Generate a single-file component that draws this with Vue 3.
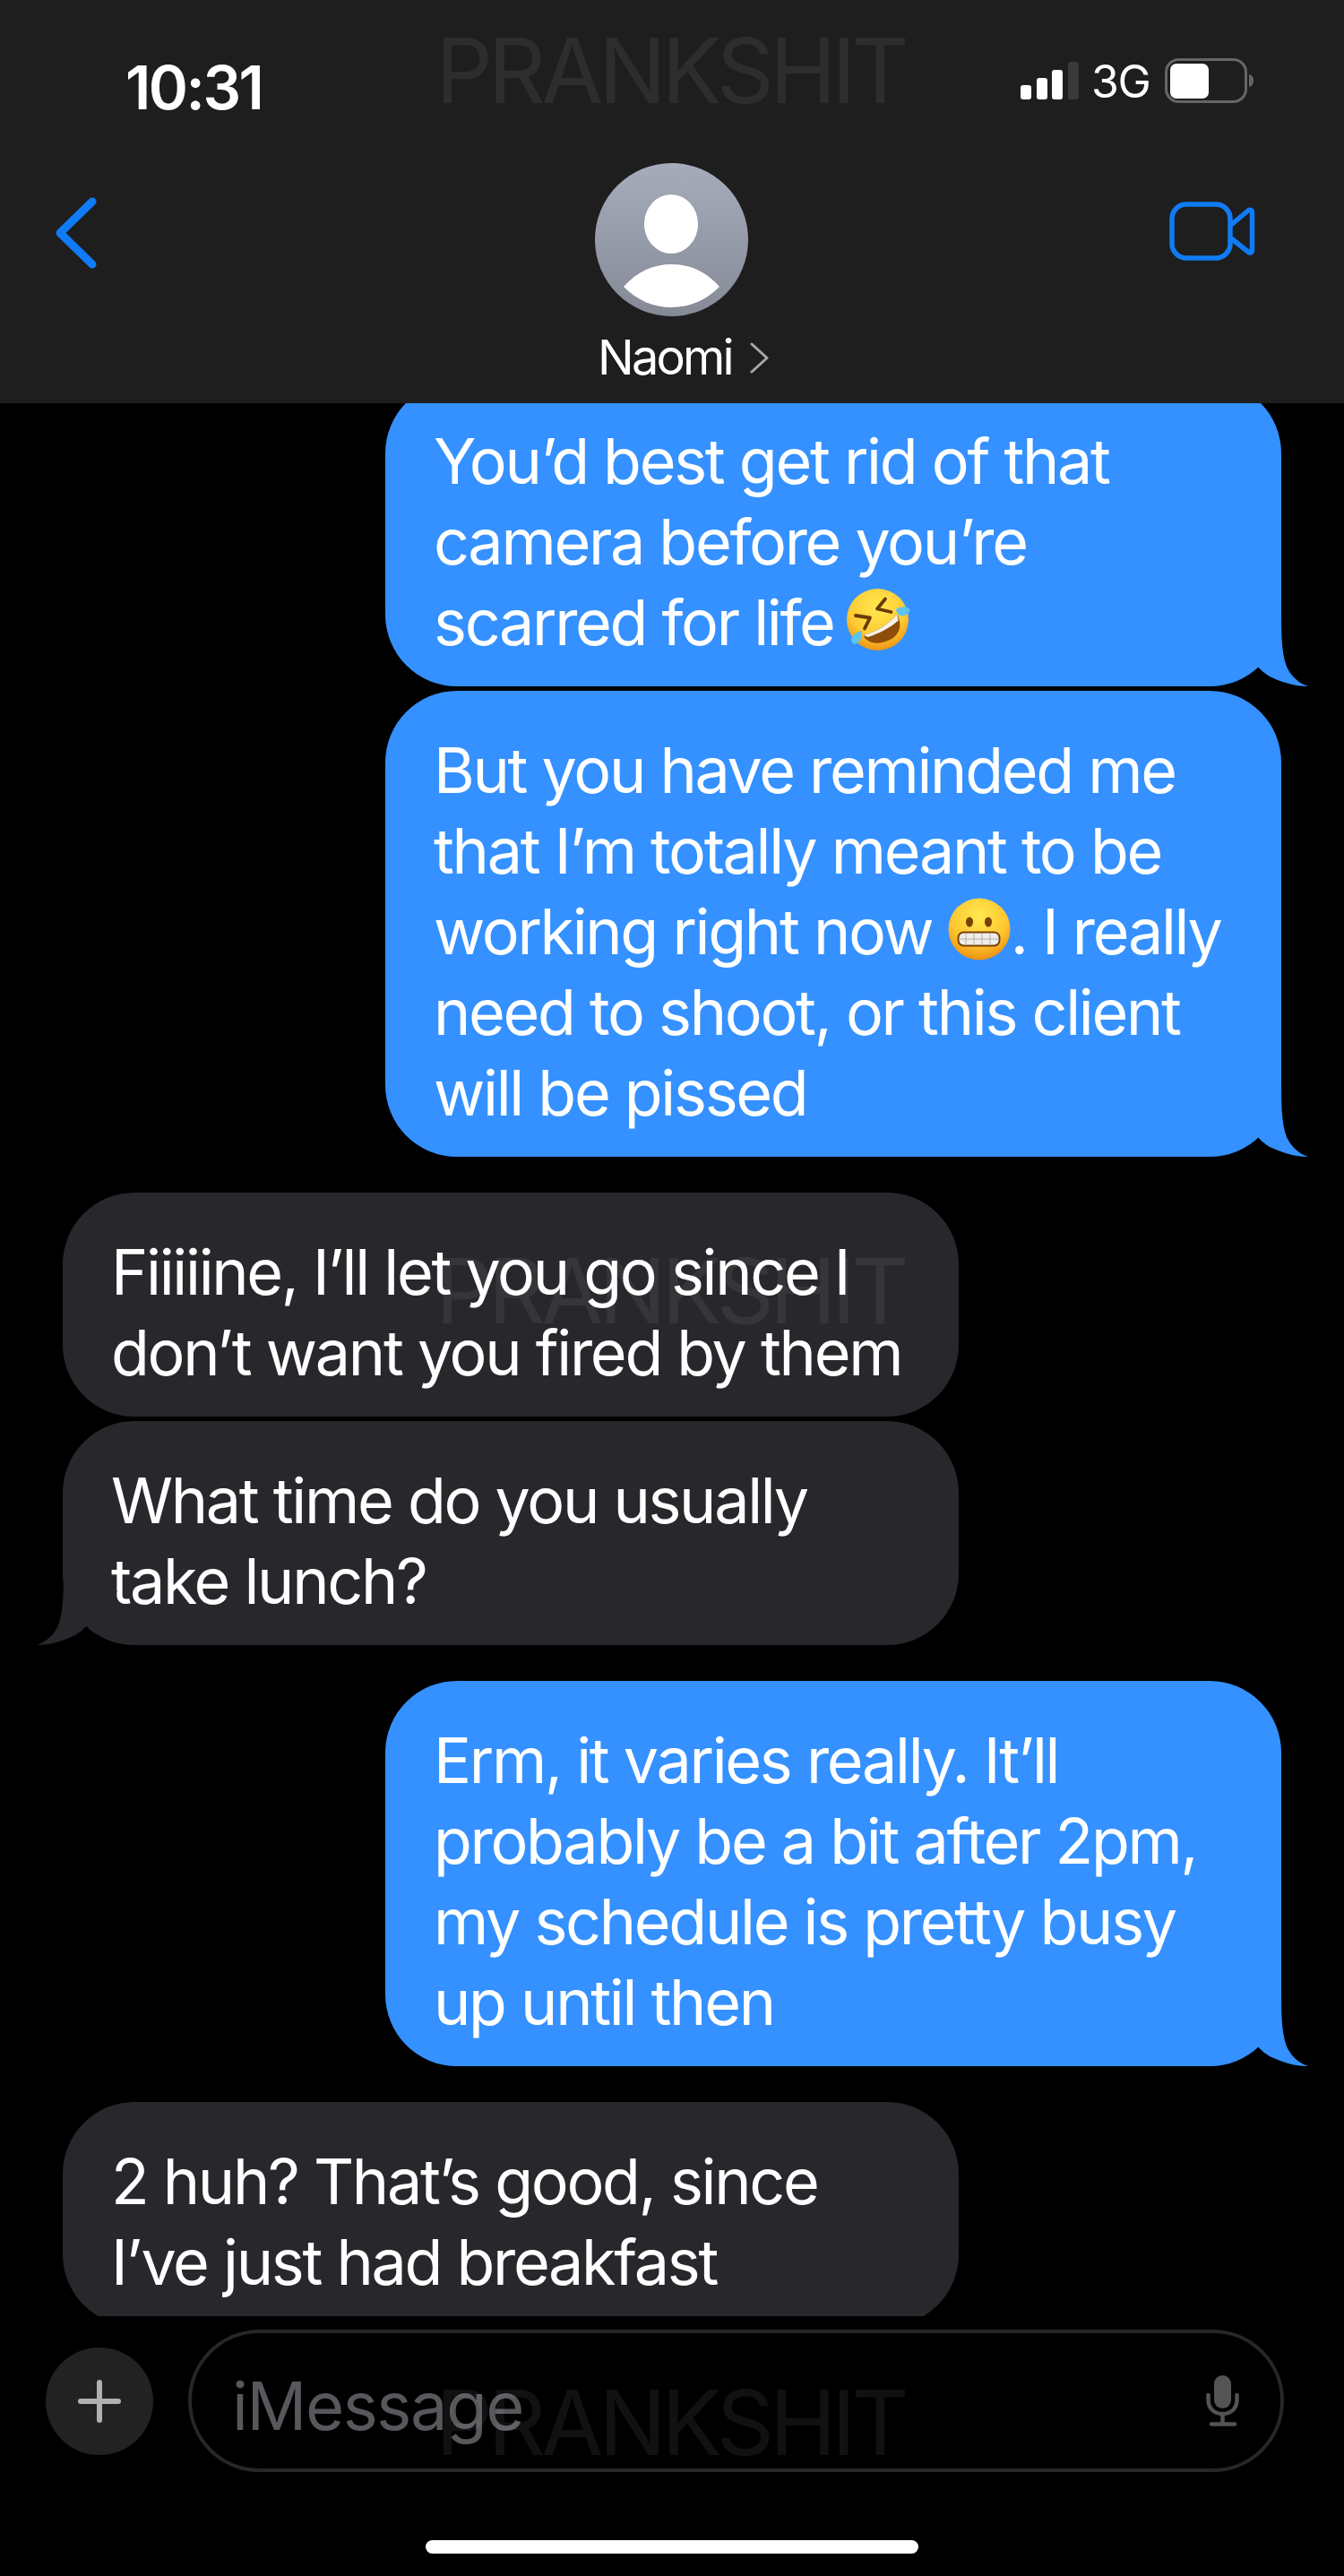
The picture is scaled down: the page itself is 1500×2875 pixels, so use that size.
<script setup>
const messages = [
  { side: 'out', tail: true, lines: [
    { text: 'You’d best get rid of that' },
    { text: 'camera before you’re' },
    { text: 'scarred for life ', emoji: 'rofl' }
  ] },
  { side: 'out', tail: true, gap: 'small', lines: [
    { text: 'But you have reminded me' },
    { text: 'that I’m totally meant to be' },
    { text: 'working right now ', emoji: 'grimace', after: '. I really' },
    { text: 'need to shoot, or this client' },
    { text: 'will be pissed' }
  ] },
  { side: 'in', lines: [
    { text: 'Fiiiiine, I’ll let you go since I' },
    { text: 'don’t want you fired by them' }
  ] },
  { side: 'in', tail: true, gap: 'small', lines: [
    { text: 'What time do you usually' },
    { text: 'take lunch?' }
  ] },
  { side: 'out', tail: true, lines: [
    { text: 'Erm, it varies really. It’ll' },
    { text: 'probably be a bit after 2pm,' },
    { text: 'my schedule is pretty busy' },
    { text: 'up until then' }
  ] },
  { side: 'in', lines: [
    { text: '2 huh? That’s good, since' },
    { text: 'I’ve just had breakfast' }
  ] }
]
</script>

<template>
  <div class="phone">
    <header class="header">
      <div class="status">
        <span class="time">10:31</span>
        <div class="status-right">
          <svg class="signal" width="65" height="42" viewBox="0 0 65 42">
            <rect x="0" y="26" width="12" height="16" rx="3" fill="#fff" />
            <rect x="18" y="18" width="12" height="24" rx="3" fill="#fff" />
            <rect x="35" y="9" width="12" height="33" rx="3" fill="#fff" />
            <rect x="53" y="0" width="12" height="42" rx="3" fill="#3a3a3a" />
          </svg>
          <span class="net">3G</span>
          <svg class="battery" width="100" height="50" viewBox="0 0 100 50">
            <rect x="1.5" y="1.5" width="89" height="47" rx="14" fill="none" stroke="#666" stroke-width="3" />
            <rect x="6" y="6" width="43" height="39" rx="7" fill="#fff" />
            <path d="M94 18 C98 19 99 22 99 25 C99 28 98 31 94 32 Z" fill="#666" />
          </svg>
        </div>
      </div>
      <div class="nav">
        <svg class="back" width="48" height="80" viewBox="0 0 48 80">
          <path d="M41 5 L5 40 L41 75" fill="none" stroke="#0f7cf5" stroke-width="9" stroke-linecap="round" stroke-linejoin="round" />
        </svg>
        <div class="contact">
          <svg class="avatar" width="171" height="171" viewBox="0 0 171 171">
            <defs>
              <linearGradient id="avatarFill" x1="0" y1="0" x2="0" y2="1">
                <stop offset="0" stop-color="#a6acbb" />
                <stop offset="1" stop-color="#868a97" />
              </linearGradient>
            </defs>
            <circle cx="85.5" cy="85.5" r="85.5" fill="url(#avatarFill)" />
            <ellipse cx="85" cy="68" rx="30" ry="33" fill="#fff" />
            <path d="M32 138 C48 120 66 113 85.5 113 C105 113 123 120 139 138 C124 153 106 161 85.5 161 C65 161 47 153 32 138 Z" fill="#fff" />
          </svg>
          <div class="name-row">
            <span class="name">Naomi</span>
            <svg class="name-chevron" width="21" height="35" viewBox="0 0 21 35">
              <path d="M2 2 L19 17.5 L2 33" fill="none" stroke="#a8a8a8" stroke-width="3" stroke-linecap="round" stroke-linejoin="round" />
            </svg>
          </div>
        </div>
        <svg class="video" width="97" height="68" viewBox="0 0 97 68">
          <rect x="3" y="3" width="65" height="60" rx="16" fill="none" stroke="#0f7cf5" stroke-width="5.5" />
          <path d="M69 26 L88 10 C90 8.5 92.500 9.500 92.500 12 L92.500 54 C92.500 57 90 58 88 56 L69 41" fill="none" stroke="#0f7cf5" stroke-width="5.500" stroke-linejoin="round" />
        </svg>
      </div>
    </header>

    <main class="thread">
      <div class="thread-inner">
        <div
          v-for="(m, i) in messages"
          :key="i"
          class="bubble"
          :class="[m.side, { tight: m.gap === 'small' }]"
        >
          <div v-for="(l, j) in m.lines" :key="j" class="line">
            {{ l.text }}<svg v-if="l.emoji === 'rofl'" class="emoji emoji-rofl" width="72" height="70" viewBox="0 0 72 70">
              <defs>
                <radialGradient id="faceA" cx="50%" cy="30%" r="70%">
                  <stop offset="0" stop-color="#ffe94f" />
                  <stop offset="0.65" stop-color="#fdcb35" />
                  <stop offset="1" stop-color="#ef9412" />
                </radialGradient>
              </defs>
              <circle cx="34.500" cy="34.500" r="34.500" fill="url(#faceA)" />
              <path d="M43 11.500 L34 22.500 L49.500 26" fill="none" stroke="#6b3a06" stroke-width="3.800" stroke-linejoin="round" stroke-linecap="round" />
              <path d="M10 30 L26 32.500 L20 44.500" fill="none" stroke="#6b3a06" stroke-width="3.800" stroke-linejoin="round" stroke-linecap="round" />
              <path d="M18.700 52 C33 48 47 40 56 28.700 C61 37 61 47 53 54 C44 61 30 63 24 58 C21 56.500 19.500 54.500 18.700 52 Z" fill="#8f4e08" />
              <path d="M18.700 52 C33 48 47 40 56 28.700 L57.700 35.500 C48 44 36 50 23.700 54 Z" fill="#f4f2ee" />
              <path d="M55 23 C60 19.500 68 19 70.500 23 C71 28 65 31 60 30 C57 29.500 55.500 26 55 23 Z" fill="#5cc4ee" />
              <path d="M17 47 C17.500 53 15 61 9.500 62 C5 62 4 57 6.500 53 C9 49.500 13 47.500 17 47 Z" fill="#5cc4ee" />
            </svg><svg v-else-if="l.emoji === 'grimace'" class="emoji" width="70" height="70" viewBox="0 0 70 70">
              <defs>
                <radialGradient id="faceB" cx="50%" cy="30%" r="70%">
                  <stop offset="0" stop-color="#ffe94f" />
                  <stop offset="0.65" stop-color="#fdc62f" />
                  <stop offset="1" stop-color="#ee8f10" />
                </radialGradient>
              </defs>
              <circle cx="35" cy="35" r="34.500" fill="url(#faceB)" />
              <ellipse cx="24" cy="27" rx="4" ry="5.500" fill="#7a4205" />
              <ellipse cx="45" cy="27" rx="4" ry="5.500" fill="#7a4205" />
              <rect x="11.500" y="38.500" width="46" height="15" rx="6" fill="#f0eeea" stroke="#7a4205" stroke-width="2" />
              <path d="M12 46 H57 M20 39 V53 M29 39 V53 M38 39 V53 M47 39 V53" stroke="#b5b0a8" stroke-width="1" fill="none" />
            </svg>{{ l.after }}
          </div>
          <svg v-if="m.tail" class="tail" width="90" height="90" viewBox="0 0 90 90">
            <path d="M60 0 C60 30 60 52 66 68 C71 79 80 87 90 90 C80 90 66 88 47 79 C42 76 37 72 33 67 L0 30 Z" />
          </svg>
        </div>
      </div>
    </main>

    <div class="composer">
      <div class="plus">
        <svg width="48" height="48" viewBox="0 0 48 48">
          <path d="M24 3 V45 M3 24 H45" stroke="#b0b0b0" stroke-width="6" stroke-linecap="round" fill="none" />
        </svg>
      </div>
      <div class="field">
        <span class="placeholder">iMessage</span>
        <svg class="mic" width="38" height="58" viewBox="0 0 38 58">
          <rect x="9" y="0" width="19" height="37" rx="9.500" fill="#545454" />
          <path d="M2.500 22 V27 C2.500 37 9 43 18.500 43 C28 43 34.500 37 34.500 27 V22" fill="none" stroke="#545454" stroke-width="4.500" stroke-linecap="round" />
          <path d="M18.500 43 V54 M6 54.500 H32" fill="none" stroke="#545454" stroke-width="4.500" stroke-linecap="round" />
        </svg>
      </div>
    </div>

    <div class="home-wrap"><div class="home"></div></div>

    <span class="mark mark-a">PRANKSHIT</span>
    <span class="mark mark-b">PRANKSHIT</span>
    <span class="mark mark-c">PRANKSHIT</span>
  </div>
</template>

<style scoped>
.phone {
  position: relative;
  width: 1500px;
  height: 2875px;
  background: #000;
  overflow: hidden;
  display: flex;
  flex-direction: column;
  font-family: Inter, "Liberation Sans", sans-serif;
  color: #fff;
}
.header {
  height: 450px;
  flex: none;
  background: #1e1e1e;
}
.status {
  height: 182px;
  display: flex;
  justify-content: space-between;
  padding: 0 100px 0 140px;
  box-sizing: border-box;
}
.time {
  margin-top: 58px;
  font-size: 67px;
  font-weight: 600;
  line-height: 80px;
  letter-spacing: -2.500px;
}
.status-right {
  display: flex;
  align-items: flex-start;
  padding-top: 65px;
}
.signal {
  margin-top: 4px;
}
.net {
  margin: -3px 0 0 14px;
  width: 82px;
  font-size: 50px;
  line-height: 58px;
  letter-spacing: -1.300px;
}
.nav {
  display: grid;
  grid-template-columns: 640px 220px 1fr;
}
.back {
  margin: 38px 0 0 62px;
}
.contact {
  display: flex;
  flex-direction: column;
  align-items: flex-start;
}
.avatar {
  margin-left: 24px;
}
.name-row {
  display: flex;
  align-items: center;
  margin: 16px 0 0 27px;
  height: 60px;
}
.name {
  font-size: 54px;
  line-height: 60px;
  letter-spacing: -2.800px;
}
.name-chevron {
  margin: 0 0 0 20px;
}
.video {
  margin: 43px 0 0 445px;
}
.thread {
  height: 2135px;
  flex: none;
  overflow: hidden;
}
.thread-inner {
  margin-top: -24px;
  display: flex;
  flex-direction: column;
}
.bubble {
  position: relative;
  width: 1000px;
  box-sizing: border-box;
  padding: 44px 0 26px 54px;
  border-radius: 80px;
  margin-top: 40px;
  font-size: 70px;
  line-height: 90px;
  letter-spacing: -2.300px;
  white-space: pre;
}
.bubble:first-child {
  margin-top: 0;
}
.bubble.tight {
  margin-top: 5px;
}
.out {
  align-self: flex-start;
  margin-left: 430px;
  background: #3491ff;
}
.in {
  margin-left: 70px;
  background: #28282c;
}
.line {
  height: 90px;
}
.emoji {
  vertical-align: -7px;
}
.emoji-rofl {
  margin-left: -3px;
}
.tail {
  position: absolute;
  bottom: 0;
  right: -30px;
}
.out .tail path {
  fill: #3491ff;
}
.in .tail {
  right: auto;
  left: -29px;
  transform: scaleX(-1);
}
.in .tail path {
  fill: #28282c;
}
.composer {
  display: flex;
  align-items: center;
  flex: none;
  padding: 15px 0 0 51px;
}
.plus {
  width: 120px;
  height: 120px;
  border-radius: 50%;
  background: #222;
  display: flex;
  align-items: center;
  justify-content: center;
}
.field {
  display: flex;
  align-items: center;
  justify-content: space-between;
  width: 1223px;
  height: 159px;
  margin-left: 39px;
  box-sizing: border-box;
  border: 4.500px solid #26272a;
  border-radius: 80px;
  padding: 0 45px 0 45px;
}
.placeholder {
  margin-top: 10px;
  font-size: 74px;
  letter-spacing: -1.400px;
  color: #57575c;
}
.mic {
  flex: none;
}
.home-wrap {
  flex: none;
  padding-top: 76px;
  display: flex;
  justify-content: center;
}
.home {
  width: 550px;
  height: 15px;
  border-radius: 8px;
  background: #fff;
}
.mark {
  position: absolute;
  left: 486px;
  font-size: 100px;
  line-height: 100px;
  letter-spacing: -5px;
  color: rgba(255, 255, 255, 0.065);
  pointer-events: none;
}
.mark-a { top: 29px; }
.mark-b { top: 1391px; }
.mark-c { top: 2654px; }
</style>

<style>
html, body {
  margin: 0;
  background: #000;
}
</style>
